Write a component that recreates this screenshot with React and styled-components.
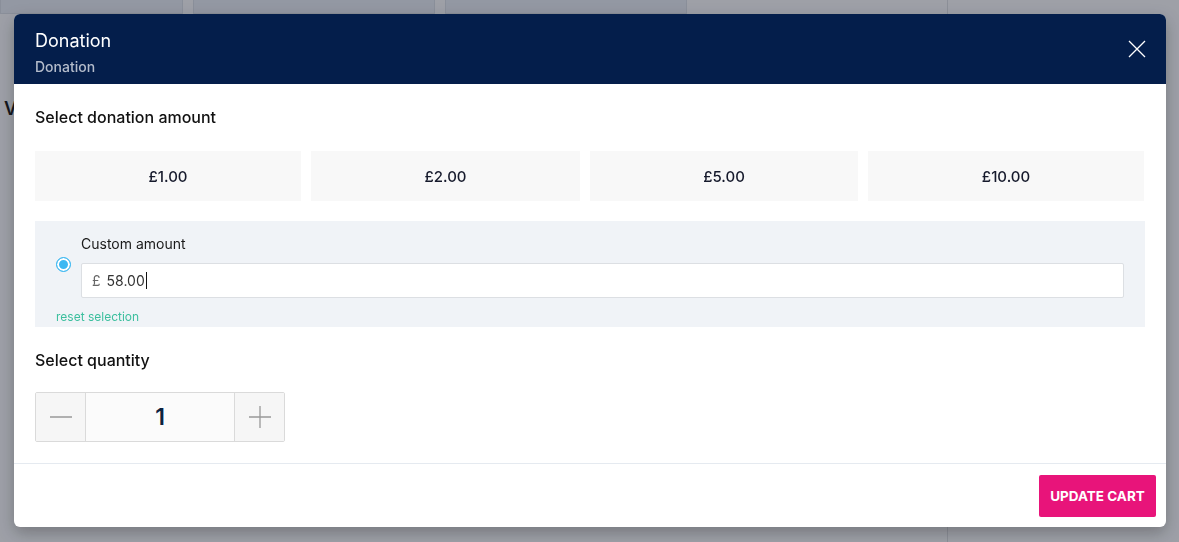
import React from 'react';
import styled, { createGlobalStyle } from 'styled-components';

const GlobalStyle = createGlobalStyle`
  * { box-sizing: border-box; }
  html, body { margin: 0; padding: 0; }
  body {
    font-family: Inter, "Liberation Sans", sans-serif;
    background: #ffffff;
    width: 1179px;
    height: 542px;
    overflow: hidden;
  }
`;

/* page behind the dialog */
const Page = styled.div`
  height: 542px;
  background: #f3f4f6;
  display: flex;
`;

const PageMain = styled.div`
  width: 948px;
  border-right: 1px solid #d6d8dc;
`;

const TabRow = styled.div`
  display: flex;
  gap: 10px;
  height: 14px;
`;

const Tab = styled.div`
  width: ${(p) => p.$w}px;
  background: #e2e6ee;
  border: 1px solid #d3d8e0;
  border-top: none;
`;

const PageHeading = styled.div`
  margin: 84px 0 0 4px;
  font-size: 18px;
  font-weight: 600;
  color: #111;
`;

const PageSide = styled.div`
  flex: 1;
  padding: 120px 0 0 150px;
  font-size: 15px;
  color: #666;
  line-height: 24px;
`;

const Overlay = styled.div`
  position: fixed;
  inset: 0;
  background: rgba(30, 36, 50, 0.4);
`;

const Modal = styled.div`
  width: 1152px;
  margin: 14px 0 0 14px;
  background: #fff;
  border-radius: 6px;
  overflow: hidden;
  box-shadow: 0 6px 16px rgba(0, 0, 0, 0.25);
`;

const Header = styled.div`
  height: 70px;
  background: #041e4b;
  padding: 16px 21px 0;
  display: flex;
  justify-content: space-between;
`;

const Titles = styled.div`
  display: flex;
  flex-direction: column;
`;

const Title = styled.div`
  color: #fff;
  font-size: 18px;
  line-height: 22px;
`;

const Subtitle = styled.div`
  color: #b4bccb;
  font-size: 14px;
  line-height: 16px;
  margin-top: 7px;
  font-weight: 500;
`;

const CloseButton = styled.button`
  border: none;
  background: none;
  padding: 0;
  margin: 10px -7px 0 0;
  width: 30px;
  height: 18px;
  display: flex;
  justify-content: center;
  cursor: pointer;
`;

const Body = styled.div`
  padding: 23px 21px 21px;
`;

const SectionTitle = styled.div`
  font-size: 16px;
  font-weight: 500;
  color: #111;
  line-height: 20px;
  margin-bottom: ${(p) => p.$gap}px;
`;

const Amounts = styled.div`
  display: grid;
  grid-template-columns: 266px 269px 268px 276px;
  column-gap: 10px;
  margin-bottom: 20px;
`;

const AmountButton = styled.button`
  height: 50px;
  border: none;
  background: #f8f8f8;
  font-family: inherit;
  font-size: 15px;
  font-weight: 500;
  color: #161a2c;
  cursor: pointer;
`;

const CustomPanel = styled.div`
  background: #f0f3f7;
  padding: 14px 21px 2px;
  margin-bottom: 23px;
`;

const CustomRow = styled.div`
  display: flex;
  align-items: center;
  gap: 9px;
`;

const Radio = styled.span`
  width: 15px;
  height: 15px;
  border-radius: 50%;
  background: #3cb8f2;
  border: 1.5px solid #3cb8f2;
  box-shadow: inset 0 0 0 2px #fff;
  flex-shrink: 0;
  margin: 0 1px 0 0;
  position: relative;
  top: -2px;
`;

const CustomFields = styled.div`
  flex: 1;
`;

const FieldLabel = styled.div`
  font-size: 14px;
  line-height: 18px;
  color: #1a1a1a;
  margin-bottom: 10px;
`;

const InputBox = styled.div`
  height: 35px;
  background: #fff;
  border: 1px solid #dcdfe3;
  border-radius: 2px;
  display: flex;
  align-items: center;
  padding: 0 10px;
  font-size: 14px;
  color: #333;
`;

const Currency = styled.span`
  color: #666;
  margin-right: 6px;
`;

const Caret = styled.span`
  display: inline-block;
  width: 1px;
  height: 17px;
  background: #111;
  margin-left: 1px;
`;

const ResetLink = styled.a`
  display: block;
  font-size: 12px;
  line-height: 16px;
  color: #3cbf9e;
  margin-top: 11px;
  text-decoration: none;
  cursor: pointer;
`;

const Stepper = styled.div`
  display: flex;
  width: 250px;
  height: 50px;
  border: 1px solid #dadada;
  border-radius: 2px;
  overflow: hidden;
`;

const StepButton = styled.button`
  width: 49px;
  border: none;
  background: #f6f6f6;
  display: flex;
  align-items: center;
  justify-content: center;
  padding: 0;
  cursor: pointer;
`;

const StepValue = styled.div`
  flex: 1;
  border-left: 1px solid #dadada;
  border-right: 1px solid #dadada;
  background: #fbfbfb;
  display: flex;
  align-items: center;
  justify-content: center;
  font-size: 23px;
  font-weight: 600;
  color: #0c2240;
`;

const Footer = styled.div`
  border-top: 1px solid #e5eaf0;
  padding: 11px 10px 10px;
  display: flex;
  justify-content: flex-end;
`;

const UpdateButton = styled.button`
  width: 117px;
  height: 42px;
  border: none;
  border-radius: 2px;
  background: #e8147a;
  color: #fff;
  font-family: inherit;
  font-size: 13.5px;
  font-weight: 700;
  text-transform: uppercase;
  cursor: pointer;
`;

const amounts = ['£1.00', '£2.00', '£5.00', '£10.00'];

const App = () => {
  return (
    <>
      <GlobalStyle />
      <Page>
        <PageMain>
          <TabRow>
            <Tab $w={183} />
            <Tab $w={242} />
            <Tab $w={242} />
          </TabRow>
          <PageHeading>V</PageHeading>
        </PageMain>
        <PageSide>
          ins
          <br />
          s.
        </PageSide>
      </Page>
      <Overlay>
        <Modal>
          <Header>
            <Titles>
              <Title>Donation</Title>
              <Subtitle>Donation</Subtitle>
            </Titles>
            <CloseButton aria-label="Close">
              <svg width="18" height="18" viewBox="0 0 18 18">
                <path d="M1 1L17 17M17 1L1 17" stroke="#fff" strokeWidth="1.3" />
              </svg>
            </CloseButton>
          </Header>
          <Body>
            <SectionTitle $gap={24}>Select donation amount</SectionTitle>
            <Amounts>
              {amounts.map((a) => (
                <AmountButton key={a}>{a}</AmountButton>
              ))}
            </Amounts>
            <CustomPanel>
              <CustomRow>
                <Radio />
                <CustomFields>
                  <FieldLabel>Custom amount</FieldLabel>
                  <InputBox>
                    <Currency>£</Currency>
                    58.00
                    <Caret />
                  </InputBox>
                </CustomFields>
              </CustomRow>
              <ResetLink>reset selection</ResetLink>
            </CustomPanel>
            <SectionTitle $gap={22}>Select quantity</SectionTitle>
            <Stepper>
              <StepButton aria-label="Decrease">
                <svg width="24" height="24" viewBox="0 0 24 24">
                  <path d="M1 12H23" stroke="#999" strokeWidth="1.3" />
                </svg>
              </StepButton>
              <StepValue>1</StepValue>
              <StepButton aria-label="Increase">
                <svg width="24" height="24" viewBox="0 0 24 24">
                  <path d="M1 12H23M12 1V23" stroke="#999" strokeWidth="1.3" />
                </svg>
              </StepButton>
            </Stepper>
          </Body>
          <Footer>
            <UpdateButton>Update cart</UpdateButton>
          </Footer>
        </Modal>
      </Overlay>
    </>
  );
};

export default App;
